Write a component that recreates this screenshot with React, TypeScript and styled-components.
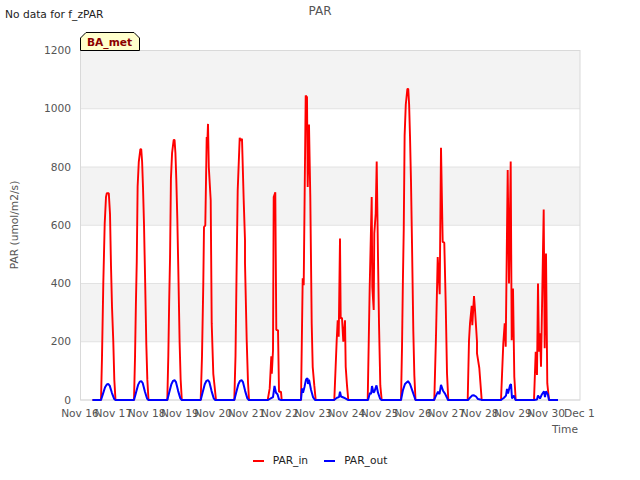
import React from 'react';
import styled, { createGlobalStyle } from 'styled-components';

const GlobalStyle = createGlobalStyle`
  html, body {
    margin: 0;
    background: #ffffff;
    overflow: hidden;
  }
`;

const Figure = styled.div`
  width: 640px;
  height: 480px;
  display: flex;
  flex-direction: column;
  font-family: 'DejaVu Sans', sans-serif;
`;

const Head = styled.header`
  height: 24px;
  display: grid;
`;

const Title = styled.div`
  grid-area: 1 / 1;
  justify-self: center;
  margin-top: 4px;
  font-size: 12px;
  line-height: 14px;
  color: #555555;
`;

const Note = styled.div`
  grid-area: 1 / 1;
  margin: 8px 0 0 5px;
  font-size: 10.67px;
  line-height: 13px;
  color: #222222;
`;

const Chart = styled.svg`
  display: block;
  width: 640px;
  height: 426px;
  font-family: 'DejaVu Sans', sans-serif;
`;

const AxisText = styled.text`
  font-size: 10.67px;
  fill: #555555;
`;

const Legend = styled.footer`
  display: flex;
  justify-content: center;
  gap: 16px;
  margin-top: 4px;
`;

const LegendItem = styled.div`
  display: flex;
  align-items: center;
  gap: 9px;
  font-size: 10.67px;
  line-height: 14px;
  color: #222222;
`;

const Swatch = styled.span<{ $color: string }>`
  width: 11px;
  height: 2px;
  background: ${p => p.$color};
`;

type Pt = [number, number];

// x is page px, y is the PAR value
const bell = (x0: number, peak: number, w = 14.5): Pt[] =>
  [
    [0, 0], [0.07, 0.17], [0.13, 0.38], [0.19, 0.55], [0.25, 0.85], [0.33, 0.95], [0.44, 1],
    [0.5, 1], [0.56, 0.95], [0.62, 0.85], [0.69, 0.7], [0.76, 0.5], [0.85, 0.22], [0.92, 0.08], [1, 0],
  ].map(([t, f]) => [x0 + t * w, f * peak] as Pt);

const parIn: Pt[] = [
  [92.5, 0],
  [101, 0], [102, 148], [103.3, 400], [104.7, 605], [106, 697], [106.8, 710], [108.8, 710], [110, 640], [111, 460],
  [112, 320], [113.3, 200], [114.3, 70], [115.5, 0],
  ...bell(134, 861),
  ...bell(167.3, 893),
  [200.7, 0], [202, 150], [203.3, 400], [204, 594], [205.3, 600], [206.7, 903], [207.3, 880], [208, 948],
  [208.8, 800], [210.7, 686], [211.7, 263], [213.3, 90], [216, 0],
  [234.3, 0], [235.5, 150], [236.5, 420], [237.7, 720], [239.7, 900], [240.6, 890], [242, 897], [243.7, 686],
  [245, 548], [245, 470], [246.7, 205], [248, 60], [249, 0],
  [267.7, 0], [269.7, 40], [271.3, 150], [271.8, 90], [273, 170], [273.7, 697], [275.3, 713], [276.3, 240],
  [278, 240], [279, 28], [281, 28], [281.7, 0],
  [301, 0], [302.7, 418], [303.7, 394], [305.7, 1045], [307, 1040], [307.7, 731], [309, 946], [310.3, 697],
  [311.7, 263], [312.7, 114], [314.3, 50], [315.7, 0],
  [334.3, 0], [336.7, 205], [337.7, 274], [338.7, 217], [340, 554], [340.7, 280], [342, 282], [343.3, 200],
  [345, 274], [345.7, 114], [347, 50], [348.3, 0],
  [367.7, 0], [369.7, 388], [371.7, 697], [372.3, 388], [373.7, 309], [374.3, 572], [375.7, 640], [376.7, 819],
  [378, 491], [379, 263], [380.3, 50], [381.7, 0],
  ...bell(401, 1068),
  [434.3, 0], [436, 220], [437.7, 491], [439.7, 363], [441, 866], [442.7, 543], [444.3, 540], [445.7, 332],
  [447, 92], [448.3, 0],
  [467.7, 0], [469, 205], [470, 263], [471.7, 323], [472.3, 257], [474, 357], [475, 310], [477, 200],
  [477, 160], [479.3, 110], [481.7, 0],
  [501, 0], [503.3, 195], [504.7, 263], [505.7, 183], [507.7, 790], [509, 400], [510.7, 819], [511.7, 205],
  [513, 383], [514.3, 80], [515.7, 0],
  [534, 0], [535.7, 166], [537, 86], [538, 400], [539, 166], [540, 229], [541, 114], [543.7, 654],
  [544.7, 178], [546, 503], [547.3, 57], [549, 0],
  [558, 0],
];

const smooth = (x0: number, peak: number): Pt[] =>
  [
    [0, 0], [0.14, 0.4], [0.28, 0.8], [0.4, 0.97], [0.5, 1], [0.6, 0.9], [0.75, 0.45], [0.9, 0.08], [1, 0],
  ].map(([t, f]) => [x0 + t * 14.5, f * peak] as Pt);

const parOut: Pt[] = [
  [92.5, 0],
  ...smooth(101, 55),
  ...smooth(134, 65),
  ...smooth(167.3, 68),
  ...smooth(200.7, 68),
  ...smooth(234.3, 68),
  [268, 0], [272, 8], [273, 10], [274.5, 48], [276, 25], [277.5, 20], [279, 2], [281, 0],
  [301, 0], [302, 40], [303, 25], [304.5, 45], [306, 70], [307.5, 75], [308, 55], [309, 70], [311, 35], [313, 10], [315, 0],
  [334, 0], [337, 8], [339, 10], [340, 28], [341, 12], [344, 8], [347, 2], [348, 0],
  [368, 0], [370, 25], [371, 20], [372, 48], [373.5, 25], [374.5, 30], [376.5, 50], [378, 25], [380, 5], [381.5, 0],
  [401, 0], [403, 35], [405, 55], [408, 65], [410, 55], [413, 25], [415.5, 0],
  [434, 0], [436, 15], [438, 28], [439.5, 20], [441, 52], [443, 32], [445, 22], [447, 8], [448, 0],
  [468, 0], [470, 8], [472, 15], [474, 16], [476, 12], [478, 3], [480, 2], [482, 0],
  [501, 0], [504, 8], [506, 15], [507, 38], [508, 22], [510, 50], [511, 55], [512, 5], [514, 15], [515.5, 0],
  [534, 0], [537, 2], [538, 15], [540, 5], [542, 20], [544, 30], [545, 10], [546, 30], [548, 18], [549, 0],
  [558, 0],
];

const LEFT = 80.5;
const RIGHT = 580;
const TOP = 50.5;
const BOTTOM = 400;

const yOf = (v: number) => BOTTOM - (v / 1200) * (BOTTOM - TOP);
const toPoints = (pts: Pt[]) => pts.map(([x, v]) => `${x},${yOf(v).toFixed(1)}`).join(' ');

const yTicks = [0, 200, 400, 600, 800, 1000, 1200];
const xLabels = [
  'Nov 16', 'Nov 17', 'Nov 18', 'Nov 19', 'Nov 20', 'Nov 21', 'Nov 22', 'Nov 23',
  'Nov 24', 'Nov 25', 'Nov 26', 'Nov 27', 'Nov 28', 'Nov 29', 'Nov 30', 'Dec 1',
];

const App: React.FC = () => (
  <Figure>
    <GlobalStyle />
    <Head>
      <Title>PAR</Title>
      <Note>No data for f_zPAR</Note>
    </Head>
    <Chart viewBox="0 24 640 426">
      {[1000, 600, 200].map(v => (
        <rect key={v} x={LEFT} y={yOf(v + 200)} width={RIGHT - LEFT} height={yOf(v) - yOf(v + 200)} fill="#f3f3f3" />
      ))}
      {yTicks.map(v => (
        <line key={v} x1={LEFT} x2={RIGHT} y1={yOf(v)} y2={yOf(v)} stroke="#e2e2e2" strokeWidth={1} />
      ))}
      <rect x={LEFT} y={TOP} width={RIGHT - LEFT} height={BOTTOM - TOP} fill="none" stroke="#d9d9d9" strokeWidth={1} />

      {yTicks.map(v => (
        <AxisText key={v} x={71} y={yOf(v) + 3.5} textAnchor="end">{v}</AxisText>
      ))}
      {xLabels.map((label, i) => (
        <AxisText key={label} x={80 + i * 33.3} y={417} textAnchor="middle">{label}</AxisText>
      ))}
      <AxisText x={578} y={433} textAnchor="end">Time</AxisText>
      <AxisText transform="translate(18 225) rotate(-90)" textAnchor="middle">PAR (umol/m2/s)</AxisText>

      <polyline points={toPoints(parIn)} fill="none" stroke="#ff0000" strokeWidth={1.9} strokeLinejoin="bevel" />
      <polyline points={toPoints(parOut)} fill="none" stroke="#0000ff" strokeWidth={2} strokeLinejoin="bevel" />

      <polygon points="80.5,50.5 80.5,38 86,32.5 134,32.5 139.5,38 139.5,50.5" fill="#ffffcc" stroke="#000000" strokeWidth={1} />
      <text x={87} y={46} fontSize={10.67} fontWeight={700} fill="#8b0000">BA_met</text>
    </Chart>
    <Legend>
      <LegendItem><Swatch $color="#ff0000" />PAR_in</LegendItem>
      <LegendItem><Swatch $color="#0000ff" />PAR_out</LegendItem>
    </Legend>
  </Figure>
);

export default App;
